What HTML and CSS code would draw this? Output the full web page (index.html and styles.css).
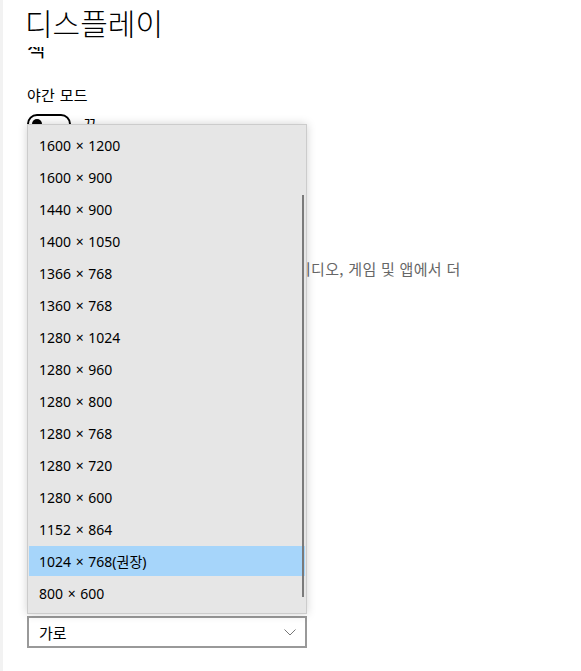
FILE: index.html
```html
<!DOCTYPE html>
<html lang="ko">
<head>
<meta charset="utf-8">
<title>디스플레이</title>
<link rel="stylesheet" href="styles.css">
</head>
<body>
<div class="app">
  <div class="page">
    <header class="header"><h1 class="title">디스플레이</h1></header>
    <main class="content">
      <div class="content-inner">
        <h2 class="section">색</h2>
        <div class="label">야간 모드</div>
        <div class="toggle-row">
          <span class="toggle"><span class="knob"></span></span>
          <span class="toggle-text">끔</span>
        </div>
        <p class="desc"><span class="desc-pad">HDR 및 WCG </span>비디오, 게임 및 앱에서 더</p>
        <div class="edge-mark"></div>
        <div class="select">
          <span class="select-text">가로</span>
          <svg class="chevron" width="12" height="7" viewBox="0 0 12 7"><polyline points="0.5,0.5 6,6 11.5,0.5" fill="none" stroke="#777" stroke-width="1"/></svg>
        </div>
      </div>
    </main>
    <div class="dropdown">
      <div class="item">1600 × 1200</div>
      <div class="item">1600 × 900</div>
      <div class="item">1440 × 900</div>
      <div class="item">1400 × 1050</div>
      <div class="item">1366 × 768</div>
      <div class="item">1360 × 768</div>
      <div class="item">1280 × 1024</div>
      <div class="item">1280 × 960</div>
      <div class="item">1280 × 800</div>
      <div class="item">1280 × 768</div>
      <div class="item">1280 × 720</div>
      <div class="item">1280 × 600</div>
      <div class="item">1152 × 864</div>
      <div class="item selected">1024 × 768(권장)</div>
      <div class="item">800 × 600</div>
      <div class="scrollbar"></div>
    </div>
  </div>
</div>
</body>
</html>
```

FILE: styles.css
```css
html, body {
  margin: 0;
  padding: 0;
  background: #fff;
}
body {
  font-family: "Noto Sans", "Noto Sans CJK KR", sans-serif;
  color: #000;
  width: 581px;
  height: 671px;
  overflow: hidden;
}
.app {
  height: 671px;
  border-left: 3px solid #f2f2f2;
}
.page {
  position: relative;
  height: 671px;
  padding-left: 24px;
}
.header {
  height: 47px;
  background: #fff;
  position: relative;
  z-index: 1;
}
.title {
  margin: 0;
  font-family: "Noto Sans CJK KR", sans-serif;
  font-weight: 300;
  font-size: 30px;
  line-height: 44px;
  position: relative;
  left: -2px;
}
.content {
  height: 624px;
  overflow: hidden;
}
.content-inner {
  margin-top: -12px;
}
.section {
  margin: 0;
  font-family: "Noto Sans CJK KR", sans-serif;
  font-weight: 400;
  font-size: 20px;
  line-height: 28px;
}
.label {
  margin-top: 22px;
  font-size: 15px;
  letter-spacing: 0.3px;
  line-height: 20px;
  font-family: "Noto Sans CJK KR", sans-serif;
}
.toggle-row {
  margin-top: 9px;
  display: flex;
  align-items: center;
  gap: 12px;
  height: 20px;
}
.toggle {
  box-sizing: border-box;
  width: 44px;
  height: 20px;
  border: 2px solid #000;
  border-radius: 10px;
  display: flex;
  align-items: center;
  padding-left: 3px;
}
.knob {
  width: 10px;
  height: 10px;
  border-radius: 50%;
  background: #000;
}
.toggle-text {
  font-size: 15px;
  font-family: "Noto Sans CJK KR", sans-serif;
}
.desc {
  margin: 125px 0 0;
  font-size: 15px;
  letter-spacing: 0.3px;
  line-height: 20px;
  color: #666;
  font-family: "Noto Sans CJK KR", sans-serif;
  white-space: nowrap;
}
.desc-pad {
  display: inline-block;
  width: 270px;
  overflow: hidden;
  vertical-align: top;
  color: transparent;
}
.edge-mark {
  margin-top: 87px;
  margin-left: -1px;
  width: 1px;
  height: 13px;
  background: #999;
}
.select {
  box-sizing: border-box;
  margin-top: 237px;
  width: 280px;
  height: 32px;
  border: 2px solid #999;
  background: #fff;
  display: flex;
  align-items: center;
  justify-content: space-between;
  padding: 0 9px 0 10px;
}
.select-text {
  font-size: 15px;
  font-family: "Noto Sans CJK KR", sans-serif;
}
.chevron {
  display: block;
}
.dropdown {
  position: absolute;
  left: 24px;
  top: 124px;
  z-index: 2;
  box-sizing: border-box;
  width: 280px;
  height: 490px;
  padding: 4px 1px;
  border: 1px solid #cccccc;
  background: #e6e6e6;
  box-shadow: 0 0 9px rgba(0, 0, 0, 0.18);
  display: flex;
  flex-direction: column;
}
.item {
  flex: none;
  height: 30px;
  margin: 1px 0;
  padding-left: 10px;
  display: flex;
  align-items: center;
  font-size: 14px;
  word-spacing: 1px;
  color: #000;
}
.item.selected {
  background: #a6d5fa;
}
.scrollbar {
  position: absolute;
  right: 2px;
  top: 70px;
  width: 2px;
  height: 402px;
  background: #7a7a7a;
}
```
